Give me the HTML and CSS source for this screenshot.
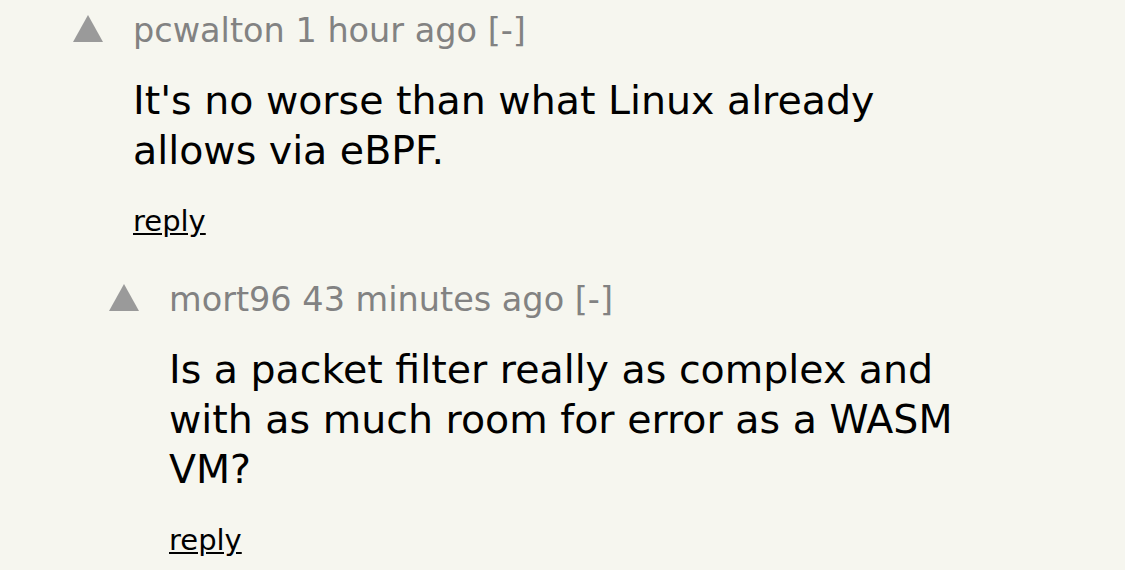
FILE: index.html
```html
<!DOCTYPE html>
<html>
<head>
<meta charset="utf-8">
<link rel="stylesheet" href="styles.css">
</head>
<body>
<div class="thread">
  <div class="comment">
    <div class="vote"><svg class="arrow" viewBox="0 0 30 27" width="30" height="27"><polygon points="15,0 30,27 0,27" fill="#9a9a9a"/></svg></div>
    <div class="content">
      <div class="head">pcwalton 1 hour ago [-]</div>
      <div class="text">It's no worse than what Linux already allows via eBPF.</div>
      <div class="reply"><a href="#">reply</a></div>
    </div>
  </div>
  <div class="comment nested">
    <div class="vote"><svg class="arrow" viewBox="0 0 30 27" width="30" height="27"><polygon points="15,0 30,27 0,27" fill="#9a9a9a"/></svg></div>
    <div class="content">
      <div class="head">mort96 43 minutes ago [-]</div>
      <div class="text">Is a packet filter really as complex and with as much room for error as a WASM VM?</div>
      <div class="reply"><a href="#">reply</a></div>
    </div>
  </div>
</div>
</body>
</html>
```
FILE: styles.css
```css
html, body {
  margin: 0;
  padding: 0;
  background: #f6f6ef;
}
body {
  font-family: "DejaVu Sans", Verdana, sans-serif;
  color: #000;
}
.thread {
  padding: 9px 135px 0 73px;
}
.comment {
  display: flex;
  align-items: flex-start;
  gap: 30px;
}
.comment.nested {
  margin-left: 36px;
  margin-top: 39px;
}
.vote {
  width: 30px;
  padding-top: 6px;
  flex: none;
}
.arrow {
  display: block;
}
.content {
  flex: 1;
  min-width: 0;
}
.head {
  color: #828282;
  font-size: 33.5px;
  line-height: 44px;
}
.text {
  font-size: 39.5px;
  line-height: 50px;
  margin-top: 22px;
}
.reply {
  font-size: 29px;
  line-height: 36px;
  margin-top: 28px;
}
.reply a {
  color: #000;
  text-decoration: underline;
}
```
